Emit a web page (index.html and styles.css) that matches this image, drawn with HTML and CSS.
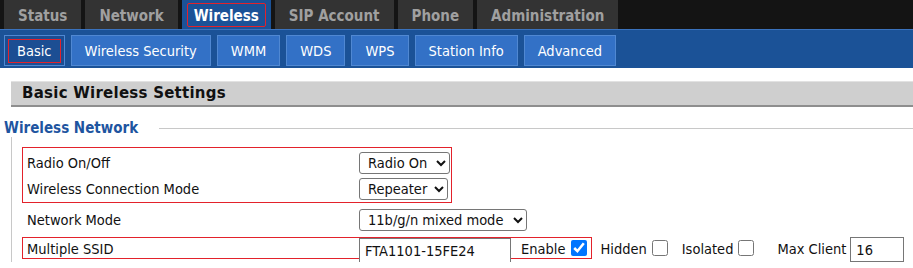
FILE: index.html
```html
<!DOCTYPE html>
<html lang="en">
  <head>
    <meta charset="UTF-8" />
    <title>Wireless - Basic</title>
    <link rel="stylesheet" href="styles.css">
  </head>
  <body>
    <div class="topnav">
      <div class="tab"><a href="#">Status</a></div>
      <div class="tab"><a href="#">Network</a></div>
      <div class="tab active"><a href="#">Wireless</a></div>
      <div class="tab"><a href="#">SIP Account</a></div>
      <div class="tab"><a href="#">Phone</a></div>
      <div class="tab"><a href="#">Administration</a></div>
    </div>

    <div class="subnav">
      <div class="subtab active"><a href="#">Basic</a></div>
      <div class="subtab"><a href="#">Wireless Security</a></div>
      <div class="subtab"><a href="#">WMM</a></div>
      <div class="subtab"><a href="#">WDS</a></div>
      <div class="subtab"><a href="#">WPS</a></div>
      <div class="subtab"><a href="#">Station Info</a></div>
      <div class="subtab"><a href="#">Advanced</a></div>
    </div>

    <div class="section-title">Basic Wireless Settings</div>

    <div class="legend">
      <span>Wireless Network</span>
      <div class="legend-line"></div>
    </div>

    <div class="fieldset">
      <div class="group">
        <div class="row">
          <label>Radio On/Off</label>
          <select class="sel-radio"><option>Radio On</option><option>Radio Off</option></select>
        </div>
        <div class="row">
          <label>Wireless Connection Mode</label>
          <select class="sel-mode"><option>Repeater</option><option>AP</option></select>
        </div>
      </div>

      <div class="row plain">
        <label>Network Mode</label>
        <select class="sel-net"><option>11b/g/n mixed mode</option></select>
      </div>

      <div class="row4">
        <div class="group ssid">
          <label>Multiple SSID</label>
          <input class="ssid-input" type="text" value="FTA1101-15FE24">
          <span class="enable">Enable</span>
          <input class="check" type="checkbox" checked>
        </div>
        <span class="opt hidden-opt">Hidden</span>
        <input class="check check-out" type="checkbox">
        <span class="opt isolated-opt">Isolated</span>
        <input class="check check-out" type="checkbox">
        <span class="opt max-opt">Max Client</span>
        <input class="max-input" type="text" value="16">
      </div>
    </div>
  </body>
</html>
```

FILE: styles.css
```css
body {
  margin: 0;
  font-family: "DejaVu Sans Condensed", "DejaVu Sans", sans-serif;
  font-size: 14.5px;
  color: #111;
  background: #fff;
  overflow: hidden;
}

/* top menu */
.topnav {
  display: flex;
  gap: 4px;
  height: 29px;
  padding-left: 4px;
  background-color: #141414;
}
.tab {
  background-color: #333;
  padding: 3px 5px 2px;
}
.tab a {
  display: block;
  height: 22px;
  line-height: 24px;
  padding: 0 8px;
  border: 1px solid transparent;
  border-radius: 2px;
  color: #a0a0a0;
  font-size: 15px;
  font-weight: bold;
  text-decoration: none;
}
.tab.active {
  background-color: #1b5297;
}
.tab.active a {
  padding: 0 6px;
  color: #fff;
  border-color: #e3222b;
}

/* second menu */
.subnav {
  display: flex;
  gap: 6px;
  padding: 5px 4px 2px;
  background-color: #1b5297;
  border-top: 1px solid #3a72bd;
}
.subtab {
  background-color: #3371c6;
  border: 1px solid #5088d2;
  padding: 3px 3px 2px;
}
.subtab a {
  display: block;
  height: 22px;
  line-height: 23px;
  padding: 0 9px;
  border: 1px solid transparent;
  color: #fff;
  text-decoration: none;
}
.subtab.active {
  background-color: #1c4e93;
}
.subtab.active a {
  padding: 0 8px;
  border-color: #e3222b;
}

.section-title {
  margin: 13px -40px 0 11px;
  height: 23px;
  line-height: 23px;
  padding-left: 11px;
  background-color: #cfcfcf;
  border-top: 1px solid #e2e2e2;
  border-bottom: 2px solid #8e8e8e;
  font-family: "DejaVu Sans", sans-serif;
  font-size: 15px;
  font-weight: bold;
  letter-spacing: 0.25px;
  color: #111;
}

.legend {
  display: flex;
  align-items: center;
  height: 18px;
  margin: 12px 0 0 4px;
}
.legend span {
  font-size: 15px;
  font-weight: bold;
  color: #1e55a0;
}
.legend-line {
  flex: 1;
  margin-left: 21px;
  border-top: 1px solid #c8c8c8;
}

.fieldset {
  margin-left: 11px;
  padding: 10px 0 0 10px;
  border-left: 1px solid #c8c8c8;
}

.group {
  width: fit-content;
  padding: 2px 1px 0 4px;
  border: 1px solid #e3222b;
}
.row {
  display: flex;
  align-items: center;
  height: 26px;
}
.row label {
  flex: none;
  width: 332px;
}
.plain {
  margin-top: 4px;
  padding-left: 5px;
}

select {
  height: 22px;
  padding: 0 0 0 4px;
  border: 1px solid #767676;
  border-radius: 3px;
  background-color: #fff;
  color: #111;
  font-family: inherit;
  font-size: 14.5px;
}
.sel-radio {
  width: 91px;
}
.sel-mode {
  width: 89px;
}
.sel-net {
  width: 168px;
}

.row4 {
  display: flex;
  align-items: flex-start;
  margin-top: 4px;
}
.group.ssid {
  display: flex;
  align-items: flex-start;
  height: 20px;
  padding: 0 4px;
}
.ssid label {
  flex: none;
  width: 332px;
  line-height: 22px;
}
input[type="text"] {
  box-sizing: border-box;
  height: 25px;
  margin: 0;
  padding: 0 5px;
  border: 1px solid #767676;
  color: #111;
  font-family: inherit;
  font-size: 14.5px;
}
.ssid-input {
  width: 152px;
}
.enable {
  margin-left: 10px;
  line-height: 23px;
}
.check {
  width: 16px;
  height: 16px;
  margin: 2px 0 0 6px;
}
.check-out {
  margin: 3px 0 0 5px;
}
.opt {
  line-height: 24px;
}
.hidden-opt {
  margin-left: 8px;
}
.isolated-opt {
  margin-left: 14px;
}
.max-opt {
  margin-left: 23px;
}
.max-input {
  width: 54px;
  margin-left: 4px !important;
}
```
